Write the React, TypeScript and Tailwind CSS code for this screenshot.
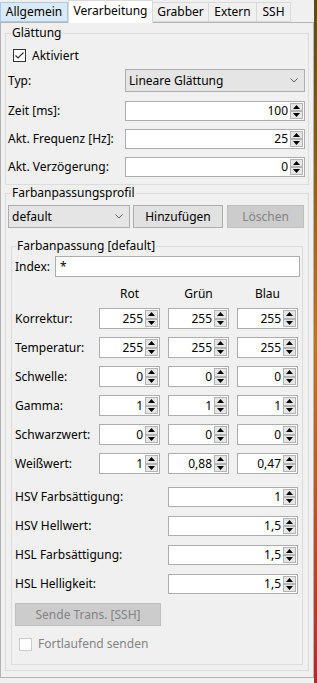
import React from "react";

function Group({
  title, titleLeft = "left-[5px]", className = "", children,
}: {
  title: string; titleLeft?: string; className?: string; children: React.ReactNode;
}) {
  return (
    <div className={`relative border border-[#dcdcdc] ${className}`}>
      <span className={`absolute -top-[9px] ${titleLeft} bg-[#f0f0f0] px-px leading-[16px]`}>{title}</span>
      {children}
    </div>
  );
}

function Arrow({ up }: { up?: boolean }) {
  return (
    <div className="flex flex-1 items-center justify-center border border-[#b4b4b4] bg-[#e6e6e6]">
      <svg width="7" height="4" viewBox="0 0 7 4">
        <path d={up ? "M0 4L3.5 0L7 4Z" : "M0 0L3.5 4L7 0Z"} fill="#000" />
      </svg>
    </div>
  );
}

function Spin({ value, className = "", h = "h-[21px]" }: { value: string; className?: string; h?: string }) {
  return (
    <div className={`flex ${h} border border-[#adadad] bg-white ${className}`}>
      <span className="flex flex-1 items-center justify-end pr-[2px]">{value}</span>
      <div className="flex w-[14px] flex-col py-px pr-px">
        <Arrow up />
        <Arrow />
      </div>
    </div>
  );
}

function Chevron() {
  return (
    <svg width="8" height="5" viewBox="0 0 8 5" className="shrink-0">
      <polyline points="0.5,0.5 4,4 7.5,0.5" fill="none" stroke="#606060" strokeWidth="1" />
    </svg>
  );
}

function Combo({ text, className = "" }: { text: string; className?: string }) {
  return (
    <div className={`flex h-[23px] items-center border border-[#adadad] bg-[#e5e5e5] pl-[3px] pr-[6px] ${className}`}>
      <span className="flex-1">{text}</span>
      <Chevron />
    </div>
  );
}

function Tab({ label, active, hover, w }: { label: string; active?: boolean; hover?: boolean; w: string }) {
  if (active) {
    return (
      <div className={`relative z-10 -mb-px flex h-[23px] ${w} items-start justify-center border border-b-0 border-[#d9d9d9] bg-white pt-[2px]`}>
        {label}
      </div>
    );
  }
  return (
    <div
      className={`flex h-[20px] ${w} items-center justify-center border ${
        hover ? "border-[#a9cbeb] bg-[#dbeaf8]" : "border-[#d9d9d9] border-l-0 bg-[#f0f0f0]"
      }`}
    >
      {label}
    </div>
  );
}

const rows = [
  { label: "Korrektur:", v: ["255", "255", "255"] },
  { label: "Temperatur:", v: ["255", "255", "255"] },
  { label: "Schwelle:", v: ["0", "0", "0"] },
  { label: "Gamma:", v: ["1", "1", "1"] },
  { label: "Schwarzwert:", v: ["0", "0", "0"] },
  { label: "Weißwert:", v: ["1", "0,88", "0,47"] },
];

const hsx = [
  { label: "HSV Farbsättigung:", v: "1" },
  { label: "HSV Hellwert:", v: "1,5" },
  { label: "HSL Farbsättigung:", v: "1,5" },
  { label: "HSL Helligkeit:", v: "1,5" },
];

export default function App() {
  return (
    <div className="flex h-[683px] w-[317px] overflow-hidden bg-[#f0f0f0] font-['Noto_Sans',sans-serif] text-[12px] leading-[16px] text-black">
      <div className="flex w-[314px] flex-col">
        {/* Tabs */}
        <div className="flex h-[22px] items-end">
          <Tab label="Allgemein" hover w="w-[68px]" />
          <Tab label="Verarbeitung" active w="w-[85px]" />
          <Tab label="Grabber" w="w-[56px]" />
          <Tab label="Extern" w="w-[48px]" />
          <Tab label="SSH" w="w-[34px]" />
        </div>

        {/* Tab page */}
        <div className="flex h-[656px] flex-col border border-[#b4b4b4] bg-[#f0f0f0] px-[4px] pt-[10px] pb-[6px]">
          <Group title="Glättung" className="flex h-[152px] flex-col pl-[2px] pr-[3px]">
            <div className="mt-[15px] flex h-[13px] items-center gap-[6px] pl-[5px]">
              <div className="flex h-[13px] w-[13px] items-center justify-center border border-[#333] bg-white">
                <svg width="11" height="11" viewBox="0 0 11 11">
                  <polyline points="1.5,5.5 4,8 9.5,2.5" fill="none" stroke="#333" strokeWidth="1.2" />
                </svg>
              </div>
              <span>Aktiviert</span>
            </div>
            <div className="mt-[7px] flex items-center">
              <span className="w-[117px]">Typ:</span>
              <Combo text="Lineare Glättung" className="w-[180px]" />
            </div>
            <div className="mt-[9px] flex items-center">
              <span className="w-[117px]">Zeit [ms]:</span>
              <Spin value="100" h="h-[20px]" className="w-[180px]" />
            </div>
            <div className="mt-[8px] flex items-center">
              <span className="w-[117px]">Akt. Frequenz [Hz]:</span>
              <Spin value="25" h="h-[20px]" className="w-[180px]" />
            </div>
            <div className="mt-[8px] flex items-center">
              <span className="w-[117px]">Akt. Verzögerung:</span>
              <Spin value="0" h="h-[20px]" className="w-[180px]" />
            </div>
          </Group>

          <Group title="Farbanpassungsprofil" className="mt-[8px] flex flex-1 flex-col px-[5px] pb-[5px]">
            <div className="-mx-[3px] mt-[11px] flex h-[23px] gap-[3px]">
              <Combo text="default" className="w-[122px]" />
              <button className="h-[23px] w-[90px] border border-[#adadad] bg-[#e1e1e1]">Hinzufügen</button>
              <button className="ml-px h-[23px] w-[77px] border border-[#bfbfbf] bg-[#cccccc] text-[#838383]">Löschen</button>
            </div>

            <Group title="Farbanpassung [default]" titleLeft="left-[4px]" className="mt-[18px] flex flex-1 flex-col pl-[3px] pr-[2px]">
              <div className="mt-[9px] flex h-[21px] items-center">
                <span className="w-[40px]">Index:</span>
                <div className="flex h-[21px] flex-1 items-center border border-[#adadad] bg-white pl-[4px]">*</div>
              </div>

              <div className="mt-[9px] flex h-[16px] pl-[84px]">
                <span className="w-[61px] text-center">Rot</span>
                <span className="ml-[8px] w-[61px] text-center">Grün</span>
                <span className="ml-[8px] w-[61px] text-center">Blau</span>
              </div>

              <div className="mt-[6px] flex flex-col gap-[8px]">
                {rows.map(r => (
                  <div key={r.label} className="flex items-center">
                    <span className="w-[84px]">{r.label}</span>
                    <Spin value={r.v[0]} className="w-[61px]" />
                    <Spin value={r.v[1]} className="ml-[8px] w-[61px]" />
                    <Spin value={r.v[2]} className="ml-[8px] w-[61px]" />
                  </div>
                ))}
              </div>

              <div className="mt-[13px] flex flex-col gap-[9px]">
                {hsx.map(r => (
                  <div key={r.label} className="flex items-center">
                    <span className="w-[153px]">{r.label}</span>
                    <Spin value={r.v} h="h-[20px]" className="w-[130px]" />
                  </div>
                ))}
              </div>

              <button className="mt-[9px] h-[23px] w-[146px] border border-[#bfbfbf] bg-[#cccccc] text-[#838383]">
                Sende Trans. [SSH]
              </button>

              <div className="mt-[10px] flex items-center gap-[6px] pl-[4px]">
                <div className="h-[13px] w-[13px] border border-[#cccccc] bg-white" />
                <span className="text-[#838383]">Fortlaufend senden</span>
              </div>
            </Group>
          </Group>
        </div>
      </div>
      <div className="w-[3px] bg-gradient-to-b from-[#5a4a14] via-[#c07420] to-[#b02a2a]" />
    </div>
  );
}
